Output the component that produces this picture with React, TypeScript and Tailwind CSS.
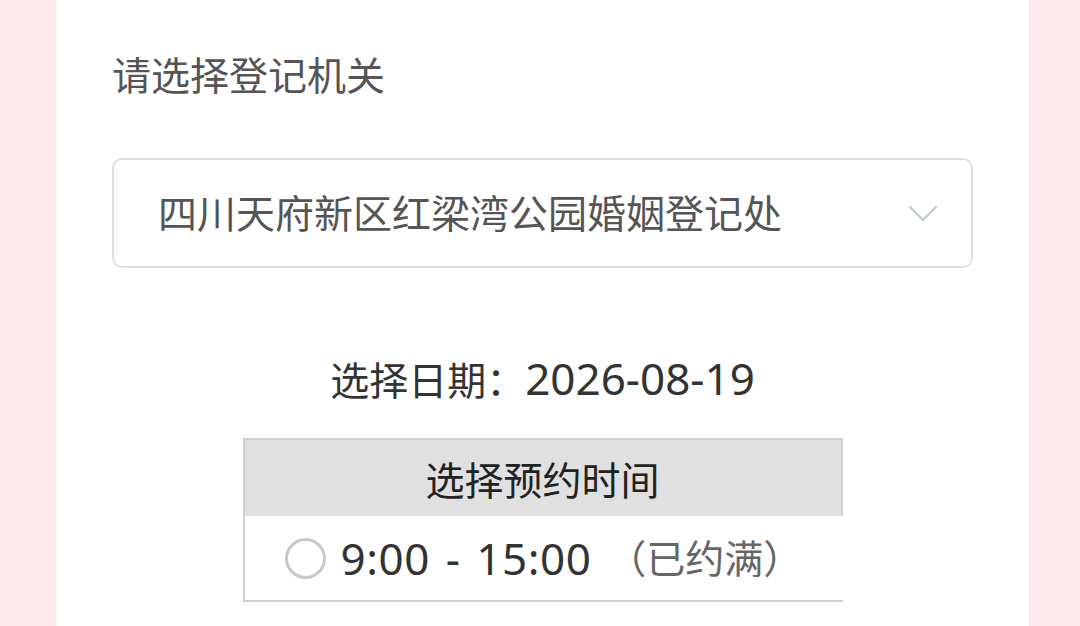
import React from "react";

export default function App() {
  return (
    <div
      className="flex h-[626px] w-[1080px] overflow-hidden bg-[#fde9eb]"
      style={{ fontFamily: '"Noto Sans", "Noto Sans CJK SC", sans-serif' }}
    >
      <div className="ml-[56px] flex w-[973px] flex-col bg-white px-[56px]">
        <div className="pt-[51px] text-[39px] leading-[48px] text-[#555]">请选择登记机关</div>

        <div className="mt-[59px] flex h-[110px] items-center justify-between rounded-[10px] border-2 border-[#dedede] pl-[44px] pr-[32px]">
          <span className="text-[39px] leading-[48px] text-[#555]">四川天府新区红梁湾公园婚姻登记处</span>
          <svg width="32" height="18" viewBox="0 0 32 18" fill="none" className="mt-[2px]">
            <path d="M3 2 L16 15 L29 2" stroke="#bcc7c3" strokeWidth="2" strokeLinecap="round" strokeLinejoin="round" />
          </svg>
        </div>

        <div className="mt-[86px] text-center text-[39px] leading-[48px] text-[#333]">
          选择日期：<span className="text-[44px]">2026-08-19</span>
        </div>

        <div className="mx-auto mt-[34px] w-[600px]">
          <div className="flex h-[78px] items-center justify-center border-2 border-b-0 border-[#d0d0d0] bg-[#e0e0e0] pt-1 text-[39px] leading-[48px] text-[#222]">
            选择预约时间
          </div>
          <div className="flex h-[86px] items-center border-b-2 border-l-2 border-[#d0d0d0] pl-[40px]">
            <span className="h-[41px] w-[41px] shrink-0 rounded-full border-[3px] border-[#c8c8c8]" />
            <span className="ml-[15px] whitespace-pre text-[44px] leading-[48px] tracking-[0.5px] text-[#333] [word-spacing:4px]">9:00 - 15:00</span>
            <span className="ml-[16px] text-[39px] leading-[48px] text-[#666]">（已约满）</span>
          </div>
        </div>
      </div>
    </div>
  );
}
